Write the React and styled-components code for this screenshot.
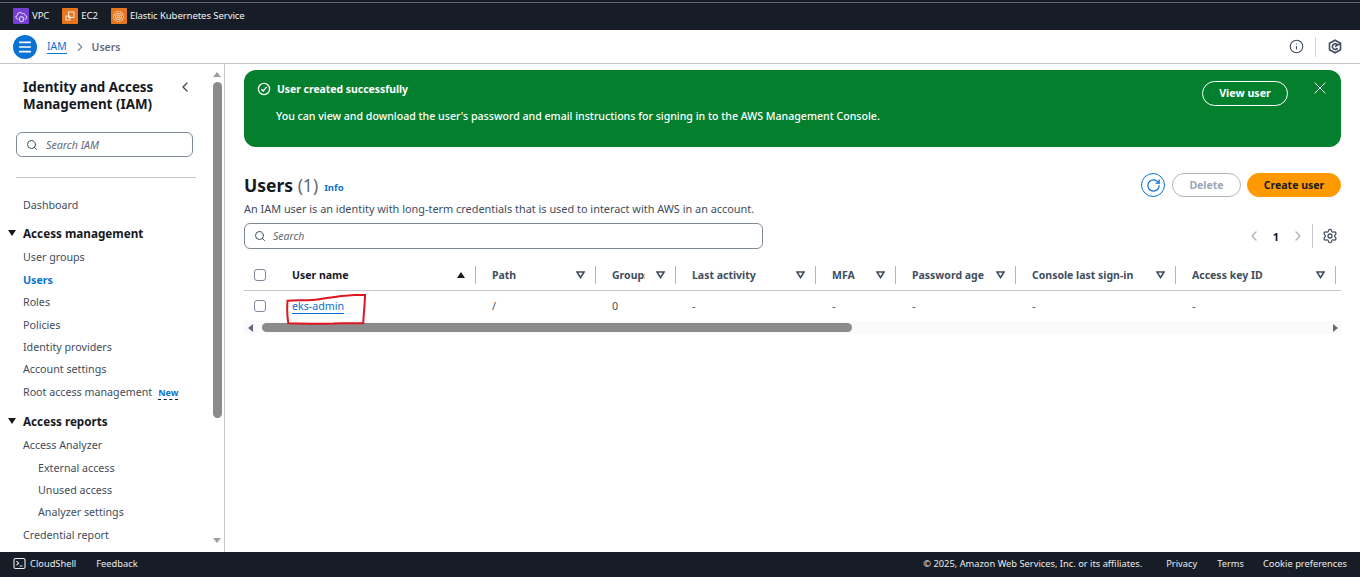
import React from 'react';
import styled, { createGlobalStyle } from 'styled-components';
import { Info, ChevronRight, ChevronLeft, Search, Settings, RotateCw, X, Menu } from 'lucide-react';

const Global = createGlobalStyle`
  html, body { margin: 0; padding: 0; height: 100%; overflow: hidden; background: #fff; }
  * { box-sizing: border-box; }
  body { font-family: "Noto Sans", "Open Sans", sans-serif; color: #16191f; }
`;

const Page = styled.div`
  width: 1360px;
  height: 577px;
  display: flex;
  flex-direction: column;
  overflow: hidden;
`;

const TopBar = styled.div`
  height: 30px;
  flex: none;
  background: #161d26;
  border-top: 2px solid #161d26;
  box-shadow: inset 0 1px 0 #5f6670;
  display: flex;
  align-items: center;
  padding: 0 0 0 13px;
  gap: 13px;
`;

const Shortcut = styled.div`
  display: flex;
  align-items: center;
  gap: 3px;
  color: #f2f3f3;
`;

const ShortcutLabel = styled.span`
  font-size: 9.6px;
  letter-spacing: -0.1px;
  padding-bottom: 2px;
`;

const ServiceTile = styled.div`
  width: 16px;
  height: 16px;
  border-radius: 1px;
  background: ${(p) => p.$bg};
  display: flex;
  align-items: center;
  justify-content: center;
`;

const Crumbs = styled.div`
  height: 34px;
  flex: none;
  background: #fff;
  border-bottom: 1px solid #c6c6cd;
  display: flex;
  align-items: center;
  padding: 0 18px 0 13px;
`;

const MenuRound = styled.div`
  width: 24px;
  height: 24px;
  border-radius: 50%;
  background: #0972d3;
  display: flex;
  align-items: center;
  justify-content: center;
  color: #fff;
  margin-right: 10px;
`;

const CrumbLink = styled.span`
  font-size: 10.4px;
  color: #0972d3;
  border-bottom: 1px solid #0972d3;
  line-height: 14px;
`;

const CrumbSep = styled.span`
  display: flex;
  margin: 0 5px 0 6px;
  color: #7d8998;
`;

const CrumbHere = styled.span`
  font-size: 10.5px;
  font-weight: 600;
  color: #5f6b7a;
`;

const CrumbTools = styled.div`
  margin-left: auto;
  display: flex;
  align-items: center;
  color: #414d5c;
`;

const ToolDivider = styled.div`
  width: 1px;
  height: 20px;
  background: #d1d5db;
  margin: 0 12px 0 11px;
`;

const Body = styled.div`
  flex: 1;
  min-height: 0;
  display: flex;
`;

const Side = styled.aside`
  width: 225px;
  flex: none;
  border-right: 1px solid #c6c6cd;
  display: flex;
  overflow: hidden;
`;

const SideInner = styled.div`
  width: 210px;
  flex: none;
  padding: 15px 15px 0 23px;
`;

const SideHead = styled.div`
  display: flex;
  justify-content: space-between;
  align-items: flex-start;
  width: 170px;
`;

const SideTitle = styled.div`
  font-size: 13.4px;
  font-weight: 700;
  line-height: 17px;
  color: #16191f;
`;

const SideSearch = styled.div`
  margin: 19px 0 0 -7px;
  width: 177px;
  height: 25px;
  border: 1px solid #7d8998;
  border-radius: 6px;
  display: flex;
  align-items: center;
  padding-left: 9px;
  gap: 8px;
  font-size: 10.7px;
  font-style: italic;
  color: #5f6b7a;
`;

const SideRule = styled.div`
  margin: 20px 0 16px -7px;
  width: 180px;
  height: 1px;
  background: #c6c6cd;
`;

const NavItem = styled.div`
  height: 22.4px;
  line-height: 22.4px;
  font-size: 10.7px;
  white-space: nowrap;
  color: ${(p) => (p.$active ? '#0972d3' : '#414d5c')};
  font-weight: ${(p) => (p.$active ? 700 : 400)};
  padding-left: ${(p) => (p.$sub ? 15 : 0)}px;
`;

const NavSection = styled.div`
  display: flex;
  align-items: center;
  height: 24px;
  margin: ${(p) => p.$top}px 0 1px -15px;
  font-size: 11.7px;
  font-weight: 700;
  color: #16191f;
  gap: 7px;
`;

const Caret = styled.span`
  width: 0;
  height: 0;
  border-left: 4px solid transparent;
  border-right: 4px solid transparent;
  border-top: 6px solid #16191f;
`;

const NewTag = styled.span`
  margin-left: 6px;
  color: #0972d3;
  font-weight: 700;
  font-size: 9px;
  border-bottom: 1px dashed #16191f;
  line-height: 12px;
  display: inline-block;
`;

const ScrollV = styled.div`
  width: 14px;
  flex: none;
  display: flex;
  flex-direction: column;
  align-items: center;
  padding-top: 8px;
`;

const ArrowUp = styled.div`
  width: 0;
  height: 0;
  border-left: 4px solid transparent;
  border-right: 4px solid transparent;
  border-bottom: 5px solid #a0a0a0;
`;

const ArrowDown = styled.div`
  width: 0;
  height: 0;
  margin-top: 120px;
  border-left: 4px solid transparent;
  border-right: 4px solid transparent;
  border-top: 5px solid #a0a0a0;
`;

const ThumbV = styled.div`
  width: 9px;
  height: 336px;
  margin-top: 5px;
  border-radius: 5px;
  background: #8b8b8b;
`;

const Main = styled.main`
  flex: 1;
  min-width: 0;
  padding: 6px 19px 0 19px;
`;

const Flash = styled.div`
  height: 77px;
  background: #037f2e;
  border-radius: 12px;
  color: #fff;
  display: flex;
  padding: 11px 13px 0 13px;
`;

const FlashBody = styled.div`
  flex: 1;
`;

const FlashTitle = styled.div`
  display: flex;
  align-items: center;
  gap: 6px;
  height: 16px;
  font-size: 10.4px;
  font-weight: 700;
`;

const FlashText = styled.div`
  margin: 12px 0 0 19px;
  font-size: 10.6px;
  font-weight: 500;
  line-height: 14px;
`;

const ViewUser = styled.div`
  width: 86px;
  height: 25px;
  border: 1px solid #fff;
  border-radius: 13px;
  font-size: 10.7px;
  font-weight: 700;
  display: flex;
  align-items: center;
  justify-content: center;
  padding-bottom: 1px;
`;

const FlashClose = styled.div`
  margin: -3px -2px 0 22px;
  display: flex;
  height: 20px;
`;

const HeaderRow = styled.div`
  margin-top: 25px;
  display: flex;
  align-items: center;
  height: 26px;
`;

const Heading = styled.div`
  font-size: 17.5px;
  font-weight: 700;
  color: #16191f;
`;

const Count = styled.span`
  font-weight: 400;
  color: #5f6b7a;
`;

const InfoLink = styled.span`
  margin: 4px 0 0 6px;
  font-size: 9.5px;
  font-weight: 700;
  color: #0972d3;
`;

const Actions = styled.div`
  margin-left: auto;
  display: flex;
  align-items: center;
  gap: 6px;
`;

const RoundRefresh = styled.div`
  width: 24px;
  height: 24px;
  margin-right: 1px;
  border: 1px solid #0972d3;
  border-radius: 50%;
  color: #0972d3;
  display: flex;
  align-items: center;
  justify-content: center;
`;

const Pill = styled.div`
  height: 24px;
  border-radius: 12px;
  width: ${(p) => p.$w}px;
  font-size: 10.5px;
  font-weight: 700;
  display: flex;
  align-items: center;
  justify-content: center;
  color: ${(p) => (p.$primary ? '#16191f' : '#9ba7b6')};
  background: ${(p) => (p.$primary ? '#ff9900' : '#fff')};
  border: 1px solid ${(p) => (p.$primary ? '#ff9900' : '#b4b4bb')};
`;

const Description = styled.div`
  margin-top: 4px;
  font-size: 10.9px;
  line-height: 14px;
  color: #414d5c;
`;

const FilterRow = styled.div`
  margin-top: 7px;
  display: flex;
  align-items: center;
  height: 26px;
`;

const TableSearch = styled.div`
  width: 519px;
  height: 26px;
  border: 1px solid #7d8998;
  border-radius: 6px;
  display: flex;
  align-items: center;
  padding-left: 9px;
  gap: 7px;
  font-size: 10.5px;
  font-style: italic;
  color: #5f6b7a;
`;

const Pager = styled.div`
  margin-left: auto;
  display: flex;
  align-items: center;
  color: #b4b4bb;
`;

const PageNum = styled.span`
  font-size: 11px;
  font-weight: 700;
  color: #16191f;
  margin: 0 11px 0 11px;
`;

const PagerDivider = styled.div`
  width: 1px;
  height: 24px;
  background: #c6c6cd;
  margin: 0 9px 0 6px;
`;

const GearSlot = styled.span`
  display: flex;
  margin-right: 3px;
  color: #414d5c;
`;

const Table = styled.div`
  margin-top: 13px;
  width: 1097px;
  overflow: hidden;
`;

const Row = styled.div`
  display: grid;
  grid-template-columns: 32px 200px 120px 80px 140px 80px 120px 160px 160px;
  height: ${(p) => p.$h}px;
  align-items: center;
  border-bottom: ${(p) => (p.$head ? '1px solid #c6c6cd' : 'none')};
  padding-bottom: ${(p) => (p.$head ? 2 : 0)}px;
`;

const HeadCell = styled.div`
  position: relative;
  display: flex;
  align-items: center;
  height: 100%;
  padding: 0 11px 0 16px;
  font-size: 10.5px;
  font-weight: 700;
  color: #414d5c;
  white-space: nowrap;
  &::after {
    content: '';
    position: absolute;
    right: 0;
    top: 4px;
    width: 1px;
    height: 18px;
    background: #b4b4bb;
  }
`;

const HeadName = styled.span`
  flex: 1;
  min-width: 0;
  overflow: hidden;
  margin-right: 11px;
  color: ${(p) => (p.$dark ? '#16191f' : '#414d5c')};
`;

const Cell = styled.div`
  position: relative;
  padding-left: 16px;
  font-size: 10.7px;
  color: #414d5c;
  white-space: nowrap;
`;

const CheckCell = styled.div`
  display: flex;
  align-items: center;
  padding-left: 10px;
  height: 100%;
`;

const Box = styled.div`
  width: 12px;
  height: 12px;
  border: 1px solid #7d8998;
  border-radius: 3px;
`;

const UserLink = styled.span`
  color: #0972d3;
  border-bottom: 1px solid #0972d3;
`;

const Scribble = styled.svg`
  position: absolute;
  left: 10px;
  top: -5px;
  pointer-events: none;
`;

const HScroll = styled.div`
  height: 13px;
  background: #fafafa;
  display: flex;
  align-items: center;
  padding: 0 3px 0 4px;
`;

const HThumb = styled.div`
  width: 590px;
  height: 9px;
  margin-left: 9px;
  border-radius: 5px;
  background: #8b8b8b;
`;

const HArrow = styled.div`
  width: 0;
  height: 0;
  border-top: 4px solid transparent;
  border-bottom: 4px solid transparent;
  ${(p) => (p.$right
    ? 'border-left: 5px solid #5f6b7a; margin-left: auto;'
    : 'border-right: 5px solid #5f6b7a;')}
`;

const Footer = styled.footer`
  height: 25px;
  flex: none;
  background: #161d26;
  color: #e9ebed;
  display: flex;
  align-items: center;
  padding: 0 13px 2px;
  font-size: 9.3px;
`;

const FootLeft = styled.div`
  display: flex;
  align-items: center;
  gap: 4px;
  margin-right: 20px;
`;

const FootRight = styled.div`
  margin-left: auto;
  display: flex;
  gap: 20px;
`;

const Copyright = styled.span`
  margin-right: 4px;
`;

const CookieLink = styled.span`
  margin-left: -1px;
`;

const SortUp = styled.span`
  width: 0;
  height: 0;
  border-left: 4.5px solid transparent;
  border-right: 4.5px solid transparent;
  border-bottom: 6px solid #16191f;
`;

const Funnel = () => (
  <svg width="9" height="8" viewBox="0 0 9 8" fill="none" stroke="#414d5c" strokeWidth="1.6">
    <path d="M1 1h7L4.5 6.6z" />
  </svg>
);

const VpcIcon = () => (
  <svg width="13" height="13" viewBox="0 0 12 12" fill="none" stroke="#fff" strokeWidth="0.8">
    <path d="M3 8.5H2.4a1.9 1.9 0 0 1-.2-3.7 2.5 2.5 0 0 1 4.6-1.4 2 2 0 0 1 2.7 1.6 1.8 1.8 0 0 1-.5 3.5H9" />
    <rect x="4.3" y="6.3" width="3.4" height="4.2" rx="0.5" />
  </svg>
);

const Ec2Icon = () => (
  <svg width="12" height="12" viewBox="0 0 12 12" fill="none" stroke="#fff" strokeWidth="0.8">
    <rect x="4.5" y="2" width="5.5" height="5.5" />
    <rect x="2" y="6" width="4" height="4" />
  </svg>
);

const EksIcon = () => (
  <svg width="13" height="13" viewBox="0 0 13 13" fill="none" stroke="#fff" strokeWidth="0.8">
    <circle cx="6.5" cy="6.5" r="5" strokeDasharray="2 0.7" />
    <circle cx="6.5" cy="6.5" r="3" />
    <circle cx="6.5" cy="6.5" r="1.1" />
  </svg>
);

const CloudShellIcon = () => (
  <svg width="13" height="13" viewBox="0 0 13 13" fill="none" stroke="#e9ebed" strokeWidth="1.1">
    <rect x="1" y="1.5" width="11" height="10" rx="1.5" />
    <path d="M3.5 4.2 5.6 6.2 3.5 8.2M6.5 9h3" />
  </svg>
);

const HexIcon = () => (
  <svg width="14" height="15" viewBox="0 0 14 15" fill="none" stroke="#414d5c" strokeWidth="1.6">
    <path d="M7 1.2 12.5 4.3v6.4L7 13.8 1.5 10.7V4.3z" />
    <path d="M9.6 6.2A2.8 2.8 0 1 0 9.6 9" />
    <path d="M7 7.5 12.3 4.6" />
  </svg>
);

const CheckCircle = () => (
  <svg width="14" height="14" viewBox="0 0 14 14" fill="none" stroke="#fff" strokeWidth="1.3">
    <circle cx="7" cy="7" r="5.6" />
    <path d="M4.3 7.2 6.2 9 9.7 5" />
  </svg>
);

const columns = ['Path', 'Groups', 'Last activity', 'MFA', 'Password age', 'Console last sign-in', 'Access key ID'];
const values = ['/', '0', '-', '-', '-', '-', '-'];

export default function App() {
  return (
    <Page>
      <Global />
      <TopBar>
        <Shortcut><ServiceTile $bg="#7340d2"><VpcIcon /></ServiceTile><ShortcutLabel>VPC</ShortcutLabel></Shortcut>
        <Shortcut><ServiceTile $bg="#e5761f"><Ec2Icon /></ServiceTile><ShortcutLabel>EC2</ShortcutLabel></Shortcut>
        <Shortcut><ServiceTile $bg="#e5761f"><EksIcon /></ServiceTile><ShortcutLabel>Elastic Kubernetes Service</ShortcutLabel></Shortcut>
      </TopBar>
      <Crumbs>
        <MenuRound><Menu size={16} strokeWidth={2.4} /></MenuRound>
        <CrumbLink>IAM</CrumbLink>
        <CrumbSep><ChevronRight size={14} /></CrumbSep>
        <CrumbHere>Users</CrumbHere>
        <CrumbTools>
          <Info size={15} strokeWidth={1.8} />
          <ToolDivider />
          <HexIcon />
        </CrumbTools>
      </Crumbs>
      <Body>
        <Side>
          <SideInner>
            <SideHead>
              <SideTitle>Identity and Access<br />Management (IAM)</SideTitle>
              <ChevronLeft size={16} color="#414d5c" strokeWidth={2} />
            </SideHead>
            <SideSearch><Search size={12} color="#414d5c" strokeWidth={2} />Search IAM</SideSearch>
            <SideRule />
            <NavItem>Dashboard</NavItem>
            <NavSection $top={5}><Caret />Access management</NavSection>
            <NavItem>User groups</NavItem>
            <NavItem $active>Users</NavItem>
            <NavItem>Roles</NavItem>
            <NavItem>Policies</NavItem>
            <NavItem>Identity providers</NavItem>
            <NavItem>Account settings</NavItem>
            <NavItem>Root access management<NewTag>New</NewTag></NavItem>
            <NavSection $top={6}><Caret />Access reports</NavSection>
            <NavItem>Access Analyzer</NavItem>
            <NavItem $sub>External access</NavItem>
            <NavItem $sub>Unused access</NavItem>
            <NavItem $sub>Analyzer settings</NavItem>
            <NavItem>Credential report</NavItem>
          </SideInner>
          <ScrollV>
            <ArrowUp />
            <ThumbV />
            <ArrowDown />
          </ScrollV>
        </Side>
        <Main>
          <Flash>
            <FlashBody>
              <FlashTitle><CheckCircle />User created successfully</FlashTitle>
              <FlashText>You can view and download the user's password and email instructions for signing in to the AWS Management Console.</FlashText>
            </FlashBody>
            <ViewUser>View user</ViewUser>
            <FlashClose><X size={20} strokeWidth={1.2} /></FlashClose>
          </Flash>
          <HeaderRow>
            <Heading>Users <Count>(1)</Count></Heading>
            <InfoLink>Info</InfoLink>
            <Actions>
              <RoundRefresh><RotateCw size={15} strokeWidth={2} /></RoundRefresh>
              <Pill $w={69}>Delete</Pill>
              <Pill $w={94} $primary>Create user</Pill>
            </Actions>
          </HeaderRow>
          <Description>An IAM user is an identity with long-term credentials that is used to interact with AWS in an account.</Description>
          <FilterRow>
            <TableSearch><Search size={12} color="#414d5c" strokeWidth={2} />Search</TableSearch>
            <Pager>
              <ChevronLeft size={16} />
              <PageNum>1</PageNum>
              <ChevronRight size={16} />
              <PagerDivider />
              <GearSlot><Settings size={16} strokeWidth={1.9} /></GearSlot>
            </Pager>
          </FilterRow>
          <Table>
            <Row $head $h={29}>
              <CheckCell><Box /></CheckCell>
              <HeadCell><HeadName $dark>User name</HeadName><SortUp /></HeadCell>
              {columns.map((c) => (
                <HeadCell key={c}><HeadName>{c}</HeadName><Funnel /></HeadCell>
              ))}
            </Row>
            <Row $h={30}>
              <CheckCell><Box /></CheckCell>
              <Cell>
                <UserLink>eks-admin</UserLink>
                <Scribble width="82" height="32" viewBox="0 0 82 32" fill="none" stroke="#dd1520" strokeWidth="2">
                  <path d="M1.500 6.700C8 6 18 6.500 26 6c10-.6 20-3 30-4 8-.8 16-1.300 23-1.300 0 9-1.500 19-1.700 28.500-10 .5-20-.5-30 .2-15 .6-30 .2-45-.2C1 22 1 14 1.500 6.700z" />
                </Scribble>
              </Cell>
              {values.map((v, i) => <Cell key={i}>{v}</Cell>)}
            </Row>
            <HScroll>
              <HArrow />
              <HThumb />
              <HArrow $right />
            </HScroll>
          </Table>
        </Main>
      </Body>
      <Footer>
        <FootLeft><CloudShellIcon />CloudShell</FootLeft>
        <span>Feedback</span>
        <FootRight>
          <Copyright>© 2025, Amazon Web Services, Inc. or its affiliates.</Copyright>
          <span>Privacy</span>
          <span>Terms</span>
          <CookieLink>Cookie preferences</CookieLink>
        </FootRight>
      </Footer>
    </Page>
  );
}
